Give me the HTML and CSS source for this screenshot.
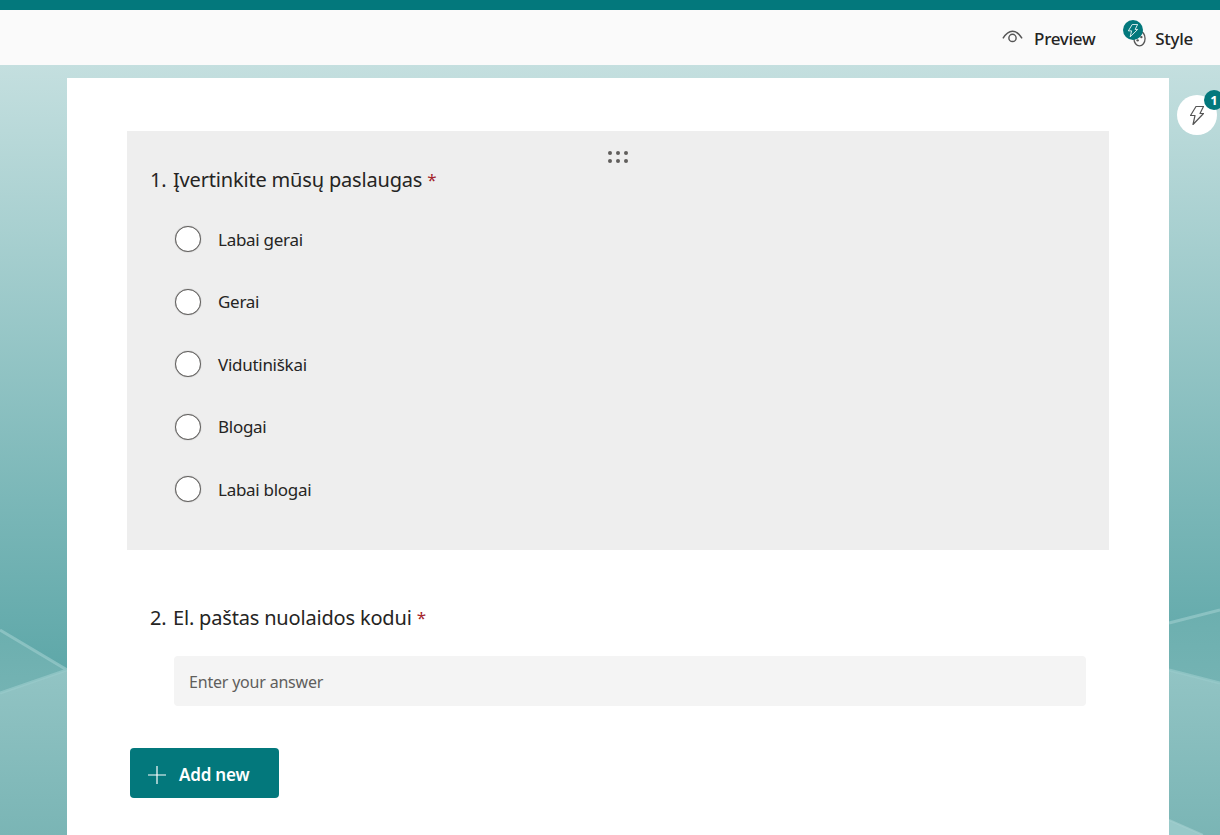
FILE: index.html
```html
<!DOCTYPE html>
<html lang="lt">
<head>
<meta charset="utf-8">
<title>Forms</title>
<link rel="stylesheet" href="styles.css">
</head>
<body>
<svg class="backdrop" viewBox="0 0 1220 770" preserveAspectRatio="none" aria-hidden="true">
  <defs>
    <linearGradient id="sky" x1="0" y1="0" x2="0" y2="1">
      <stop offset="0" stop-color="#c4dfdf"/>
      <stop offset=".78" stop-color="#5fa8a9"/>
    </linearGradient>
    <linearGradient id="low" x1="0" y1="0" x2="0" y2="1">
      <stop offset="0" stop-color="#92c4c4"/>
      <stop offset="1" stop-color="#7ab5b5"/>
    </linearGradient>
    <linearGradient id="band" x1="0" y1="0" x2="0" y2="1">
      <stop offset="0" stop-color="#6cafaf"/>
      <stop offset="1" stop-color="#74b3b3"/>
    </linearGradient>
  </defs>
  <rect width="1220" height="770" fill="url(#sky)"/>
  <polygon points="0,565 67,605 0,628" fill="url(#band)"/>
  <polygon points="0,628 67,605 67,770 0,770" fill="url(#low)"/>
  <polygon points="1169,558 1220,545 1220,618 1169,605" fill="url(#band)"/>
  <polygon points="1169,605 1220,618 1220,770 1169,770" fill="url(#low)"/>
  <polygon points="1169,755 1203,770 1169,770" fill="#98c9c9"/>
  <path d="M0 565 67 605 0 628" fill="none" stroke="#98caca" stroke-width="3" opacity=".7"/>
  <path d="M1169 558 1220 545M1169 605 1220 618" fill="none" stroke="#98caca" stroke-width="3" opacity=".7"/>
  <path d="M1169 755 1203 770" fill="none" stroke="#a3cfcf" stroke-width="2" opacity=".7"/>
</svg>

<div class="topbar"></div>
<header class="header">
  <button class="tool">
    <svg class="tool-icon" viewBox="0 0 22 14" aria-hidden="true"><path d="M1 8.500C4 3.500 7.500 1 11 1s7 2.500 10 7.500" fill="none" stroke="#555" stroke-width="1.500"/><circle cx="11" cy="8" r="3.800" fill="none" stroke="#555" stroke-width="1.500"/></svg>
    <span>Preview</span>
  </button>
  <button class="tool style-tool">
    <span class="palette">
      <svg viewBox="0 0 14 18" aria-hidden="true"><ellipse cx="7" cy="9" rx="6" ry="8" fill="none" stroke="#555" stroke-width="1.400"/><circle cx="9" cy="7.500" r="1.300" fill="#555"/><circle cx="5" cy="11" r="1.300" fill="#555"/></svg>
      <span class="palette-badge">
        <svg viewBox="0 0 14 18" aria-hidden="true"><path d="M6 .5H13.500L10 7.500H13.500L3 18 5 9.500H.5Z" fill="none" stroke="#fff" stroke-width="1.200" stroke-linejoin="round"/></svg>
      </span>
    </span>
    <span>Style</span>
  </button>
</header>

<main class="page">
  <section class="card">
    <div class="question active">
      <span class="drag" aria-hidden="true"><i></i><i></i><i></i><i></i><i></i><i></i></span>
      <h2 class="q-title"><span class="q-num">1.</span>Įvertinkite mūsų paslaugas <span class="req">*</span></h2>
      <ul class="options">
        <li class="option"><span class="radio"></span>Labai gerai</li>
        <li class="option"><span class="radio"></span>Gerai</li>
        <li class="option"><span class="radio"></span>Vidutiniškai</li>
        <li class="option"><span class="radio"></span>Blogai</li>
        <li class="option"><span class="radio"></span>Labai blogai</li>
      </ul>
    </div>
    <div class="question second">
      <h2 class="q-title"><span class="q-num">2.</span>El. paštas nuolaidos kodui <span class="req">*</span></h2>
      <div class="answer">Enter your answer</div>
    </div>
    <button class="add">
      <svg viewBox="0 0 18 18" aria-hidden="true"><path d="M9 0V18M0 9H18" stroke="#fff" stroke-width="1.200"/></svg>
      Add new
    </button>
  </section>
</main>

<div class="bolt">
  <svg viewBox="0 0 14 19" aria-hidden="true"><path d="M6 .5H13.500L10 7.500H13.500L3 18.500 5 9.500H.5Z" fill="none" stroke="#555" stroke-width="1.200" stroke-linejoin="round"/></svg>
  <span class="bolt-count">1</span>
</div>
</body>
</html>
```
FILE: styles.css
```css
* { box-sizing: border-box; }
html, body { height: 100%; }
body {
  margin: 0;
  height: 835px;
  overflow: hidden;
  position: relative;
  font-family: "Noto Sans", "Open Sans", sans-serif;
  font-weight: 375;
  color: #252423;
}
.backdrop {
  position: absolute;
  left: 0;
  top: 65px;
  width: 1220px;
  height: 770px;
}
.topbar {
  position: relative;
  height: 10px;
  background: #03787c;
}
.header {
  position: relative;
  height: 55px;
  background: #fafafa;
  display: flex;
  justify-content: flex-end;
  align-items: center;
  gap: 28px;
  padding: 2px 27px 0 0;
}
.tool {
  display: flex;
  align-items: center;
  gap: 11px;
  padding: 0;
  border: 0;
  background: none;
  font: 500 17px "Noto Sans", sans-serif;
  letter-spacing: -0.3px;
  color: #252423;
}
.tool-icon { width: 21px; height: 14px; margin-top: -3px; }
.style-tool { gap: 9px; }
.palette {
  position: relative;
  width: 23px;
  height: 27px;
  margin-top: -10px;
}
.palette > svg {
  position: absolute;
  left: 10px;
  top: 10px;
  width: 13px;
  height: 17px;
}
.palette-badge {
  position: absolute;
  left: 0;
  top: 0;
  width: 20px;
  height: 20px;
  border-radius: 50%;
  background: #03787c;
  display: flex;
  align-items: center;
  justify-content: center;
}
.palette-badge svg { width: 10px; height: 13px; }
.page {
  position: relative;
  padding: 13px 51px 0 67px;
}
.card {
  background: #fff;
  height: 757px;
  padding: 53px 60px 0;
}
.question { position: relative; }
.question.active {
  background: #eee;
  height: 419px;
  padding: 35px 23px 0;
}
.drag {
  position: absolute;
  left: 481px;
  top: 20px;
  width: 20px;
  display: grid;
  grid-template-columns: repeat(3, 4px);
  gap: 4px;
}
.drag i {
  width: 4px;
  height: 4px;
  border-radius: 50%;
  background: #605e5c;
}
.q-title {
  margin: 0;
  font-size: 20px;
  line-height: 28px;
  font-weight: 375;
  letter-spacing: -0.18px;
}
.q-num {
  display: inline-block;
  width: 23px;
}
.req {
  color: #a4262c;
  font-size: 17px;
  vertical-align: 1px;
}
.options {
  list-style: none;
  margin: 14px 0 0;
  padding: 0 0 0 25px;
}
.option {
  height: 62.5px;
  display: flex;
  align-items: center;
  gap: 17px;
  font-size: 17px;
  letter-spacing: -0.28px;
}
.radio {
  width: 26px;
  height: 26px;
  border: 1px solid #605e5c;
  border-radius: 50%;
  background: #fff;
  box-shadow: 0 0 1px #808080;
}
.second { padding: 54px 23px 0; }
.answer {
  margin: 24px 0 0 24px;
  height: 50px;
  display: flex;
  align-items: center;
  padding: 2px 0 0 15px;
  border-radius: 4px;
  background: #f4f4f4;
  color: #605e5c;
  font-size: 16px;
  letter-spacing: -0.2px;
}
.add {
  margin: 42px 0 0 3px;
  width: 149px;
  height: 50px;
  border: 0;
  border-radius: 4px;
  background: #03787c;
  color: #fff;
  display: flex;
  align-items: center;
  gap: 13px;
  padding: 3px 0 0 18px;
  font: 600 17px "Noto Sans", sans-serif;
  letter-spacing: -0.2px;
}
.add svg { width: 18px; height: 18px; }
.bolt {
  position: absolute;
  left: 1177px;
  top: 95px;
  width: 40px;
  height: 40px;
  border-radius: 50%;
  background: #fff;
  display: flex;
  align-items: center;
  justify-content: center;
}
.bolt svg { width: 14px; height: 19px; }
.bolt-count {
  position: absolute;
  left: 27px;
  top: -5px;
  width: 20px;
  height: 20px;
  border-radius: 50%;
  background: #03787c;
  color: #fff;
  font-size: 13px;
  font-weight: 700;
  line-height: 20px;
  text-align: center;
}
```
